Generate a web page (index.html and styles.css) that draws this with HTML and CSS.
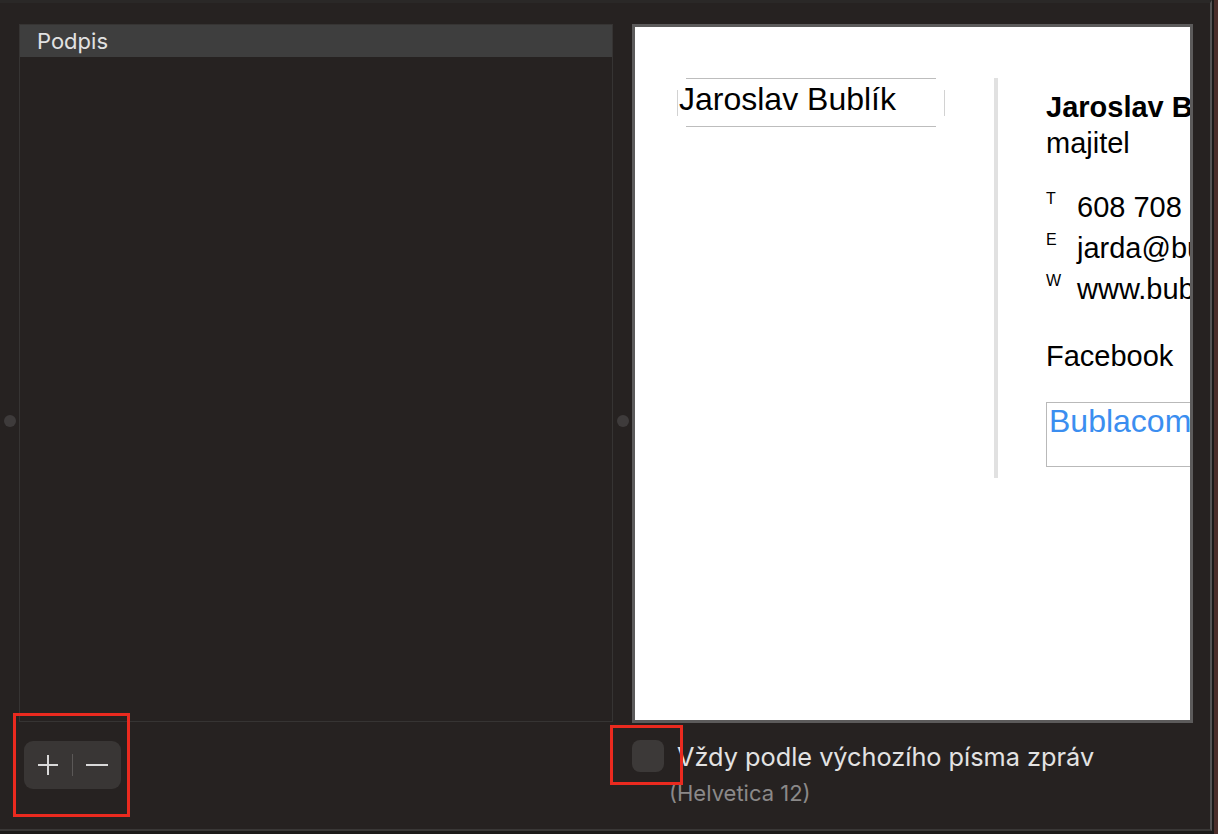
FILE: index.html
```html
<!DOCTYPE html>
<html lang="cs">
<head>
    <meta charset="UTF-8">
    <meta name="viewport" content="width=device-width, initial-scale=1.0">
    <title>Podpisy</title>
    <link rel="stylesheet" href="styles.css">
</head>
<body>
    <div class="window">
        <div class="panes">
            <div class="splitter"><span class="knob"></span></div>
            <div class="list-pane">
                <div class="list-header">Podpis</div>
            </div>
            <div class="splitter"><span class="knob"></span></div>
            <div class="preview">
                <div class="sig">
                    <div class="sig-left">
                        <div class="name-box">Jaroslav Bublík</div>
                    </div>
                    <div class="sig-rule"></div>
                    <div class="sig-right">
                        <div class="sig-name">Jaroslav Bublík</div>
                        <div class="sig-role">majitel</div>
                        <div class="contacts">
                            <div class="contact"><span class="tag">T</span>608 708 123</div>
                            <div class="contact"><span class="tag">E</span>jarda@bublacom.cz</div>
                            <div class="contact"><span class="tag">W</span>www.bublacom.cz</div>
                        </div>
                        <div class="social">Facebook</div>
                        <div class="logo-box"><span class="logo-link">Bublacom</span></div>
                    </div>
                </div>
            </div>
        </div>

        <div class="footer">
            <div class="footer-left">
                <div class="seg">
                    <button class="seg-btn" type="button">
                        <svg width="20" height="20" viewBox="0 0 20 20"><path d="M10 0V20M0 10H20" stroke="#d9d9d9" stroke-width="2"/></svg>
                    </button>
                    <span class="seg-div"></span>
                    <button class="seg-btn" type="button">
                        <svg width="22" height="20" viewBox="0 0 22 20"><path d="M0 10H22" stroke="#d9d9d9" stroke-width="2"/></svg>
                    </button>
                </div>
            </div>
            <div class="footer-right">
                <label class="check-row">
                    <span class="checkbox"></span>
                    <span class="check-label">Vždy podle výchozího písma zpráv</span>
                </label>
                <div class="font-hint">(Helvetica 12)</div>
            </div>
        </div>

        <div class="mark mark-buttons"></div>
        <div class="mark mark-check"></div>
    </div>
</body>
</html>
```

FILE: styles.css
```css
      html, body {
          margin: 0;
          height: 100%;
      }
      body {
          background: linear-gradient(to right, #1c1a19 1214px, #4b2e2a 1214px);
          font-family: "Inter", "Noto Sans", sans-serif;
          overflow: hidden;
      }
      .window {
          position: relative;
          width: 1212px;
          height: 831px;
          background-color: #262221;
          border-top: 3px solid #2a2827;
          border-right: 2px solid #565454;
          border-bottom: 2px solid #393736;
          box-sizing: border-box;
          padding-top: 21px;
      }
      .panes {
          display: flex;
          align-items: flex-start;
      }
      .splitter {
          width: 19px;
          height: 699px;
          display: flex;
          justify-content: center;
          padding-top: 391px;
          box-sizing: border-box;
      }
      .knob {
          width: 12px;
          height: 12px;
          border-radius: 50%;
          background-color: #3e3b3b;
      }
      .list-pane {
          width: 594px;
          height: 698px;
          border: 1px solid #363433;
          box-sizing: border-box;
      }
      .list-header {
          height: 32px;
          background-color: #3e3e3e;
          color: #e2e2e2;
          font-size: 22px;
          line-height: 33px;
          padding-left: 17px;
      }
      .preview {
          width: 561px;
          height: 699px;
          border: 3px solid #5c5b5b;
          box-sizing: border-box;
          background-color: #fff;
          overflow: hidden;
      }

      /* signature */
      .sig {
          display: flex;
          align-items: flex-start;
          padding: 51px 0 0 42px;
          font-family: "Liberation Sans", Arial, sans-serif;
          font-size: 29px;
          color: #000;
          white-space: nowrap;
      }
      .sig-left {
          width: 268px;
          flex-shrink: 0;
      }
      .name-box {
          height: 49px;
          box-sizing: border-box;
          font-size: 32px;
          line-height: 42px;
          padding-left: 2px;
          background:
              linear-gradient(#bdbdbd, #bdbdbd) 9px 0 / calc(100% - 18px) 1px no-repeat,
              linear-gradient(#bdbdbd, #bdbdbd) 9px 100% / calc(100% - 18px) 1px no-repeat,
              linear-gradient(#d2d2d2, #d2d2d2) 0 50% / 1px 26px no-repeat,
              linear-gradient(#d2d2d2, #d2d2d2) 100% 50% / 1px 26px no-repeat;
      }
      .sig-rule {
          width: 4px;
          height: 400px;
          margin-left: 49px;
          background-color: #e1e1e1;
          flex-shrink: 0;
      }
      .sig-right {
          margin-left: 48px;
          padding-top: 11px;
          line-height: 36px;
      }
      .sig-name {
          font-weight: bold;
      }
      .contacts {
          margin-top: 26px;
      }
      .contact {
          line-height: 41px;
      }
      .tag {
          display: inline-block;
          width: 31px;
          font-size: 16px;
          line-height: 24px;
          vertical-align: top;
      }
      .social {
          margin-top: 28px;
      }
      .logo-box {
          margin-top: 28px;
          width: 220px;
          height: 65px;
          border: 1px solid #b9b9b9;
          box-sizing: border-box;
          padding: 0 0 0 2px;
          font-size: 32px;
      }
      .logo-link {
          color: #3b8ef0;
      }

      /* footer */
      .footer {
          display: flex;
          height: 106px;
      }
      .footer-left {
          width: 632px;
          padding: 18px 0 0 24px;
          box-sizing: border-box;
      }
      .seg {
          display: flex;
          align-items: center;
          width: 97px;
          height: 48px;
          border-radius: 9px;
          background-color: #393635;
      }
      .seg-btn {
          flex: 1;
          height: 100%;
          display: flex;
          align-items: center;
          justify-content: center;
          background: none;
          border: none;
          padding: 0;
      }
      .seg-div {
          width: 1px;
          height: 22px;
          background-color: #5b5857;
      }
      .footer-right {
          padding-top: 17px;
      }
      .check-row {
          display: flex;
          align-items: center;
          gap: 13px;
      }
      .checkbox {
          width: 32px;
          height: 32px;
          border-radius: 8px;
          background-color: #3c3938;
      }
      .check-label {
          color: #e3e3e3;
          font-size: 25.3px;
      }
      .font-hint {
          margin: 8px 0 0 37px;
          color: #8b8989;
          font-size: 22px;
          line-height: 26px;
      }

      /* annotation frames */
      .mark {
          position: absolute;
          border: 3px solid #ea2a1f;
          box-sizing: border-box;
      }
      .mark-buttons {
          left: 13px;
          top: 710px;
          width: 117px;
          height: 104px;
      }
      .mark-check {
          left: 610px;
          top: 722px;
          width: 73px;
          height: 60px;
      }
```
